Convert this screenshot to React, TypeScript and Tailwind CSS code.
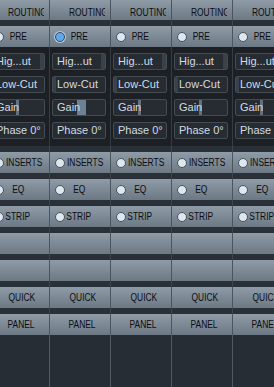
import React from 'react';

const LABEL_FONT = "font-['Liberation_Sans_Narrow','Liberation_Sans',sans-serif] text-[10px] leading-none text-[#0b0d10]";

// narrow caps label, squeezed to the width of the mixer's pixel font
function Label({ text, origin = 'origin-center' }: { text: string; origin?: string }) {
  return <span className={`inline-block whitespace-nowrap scale-x-[0.84] ${origin} ${LABEL_FONT}`}>{text}</span>;
}

function Gray({ children, h = 'h-[21px]' }: { children?: React.ReactNode; h?: string }) {
  return (
    <div className={`${h} shrink-0 border-r border-[#4b5560] bg-linear-to-b from-[#8f9ba7] to-[#6c7884] relative overflow-hidden`}>
      {children}
    </div>
  );
}

function Gap() {
  return <div className="h-[6px] shrink-0 border-r border-[#3c444d] bg-[#2a3037]" />;
}

function Radio({ on }: { on?: boolean }) {
  return (
    <span
      className={`w-[10px] h-[10px] rounded-full border shrink-0 ${on ? 'bg-[#61a8ea] border-[#2f4f6e] shadow-[0_0_0_1px_#b9c8d6]' : 'bg-[#dee6ee] border-[#48525c]'}`}
    />
  );
}

function RadioRow({ label, on, left }: { label: string; on?: boolean; left?: boolean }) {
  return (
    <Gray>
      <div className="flex items-center h-full pl-[5px]">
        <Radio on={on} />
        <span className={`ml-[2px] w-[24px] flex ${left ? 'justify-start' : 'justify-center'}`}>
          <Label text={label} origin={left ? 'origin-left' : 'origin-center'} />
        </span>
      </div>
    </Gray>
  );
}

function Btn({ text, children }: { text: string; children?: React.ReactNode }) {
  return (
    <div className="relative h-[17px] ml-[2px] w-[54px] rounded-[2px] border border-[#434b53] bg-[#262c32] overflow-hidden">
      {children}
      <span className="relative z-10 block pl-[4px] leading-[15px] text-[11px] text-[#d3dbe3] font-['Liberation_Sans',sans-serif] whitespace-nowrap">
        {text}
      </span>
    </div>
  );
}

function Strip({ selected }: { selected?: boolean }) {
  return (
    <div className="w-[61px] shrink-0 flex flex-col h-full">
      <Gray h="h-[20px]">
        <div className="pl-[19px] h-full flex items-center">
          <div className="w-[36px] overflow-hidden">
            <Label text="ROUTING" origin="origin-left" />
          </div>
        </div>
      </Gray>
      <Gap />
      <RadioRow label="PRE" on={selected} />
      <div className="h-[99px] shrink-0 border-r border-[#353c44] bg-[#1c2024] flex flex-col gap-[6px] pt-[6px]">
        <Btn text="Hig...ut">
          <span className="absolute right-0 top-0 bottom-0 w-[4px] bg-[#39414a]" />
        </Btn>
        <Btn text="Low-Cut">
          <span className="absolute left-0 top-0 bottom-0 w-[3px] bg-[#39414a]" />
        </Btn>
        <Btn text="Gain">
          <span
            className={`absolute top-0 bottom-0 left-[24px] ${selected ? 'w-[9px] bg-[#6b8294]' : 'w-[3px] bg-[#61717f]'}`}
          />
        </Btn>
        <Btn text="Phase 0°" />
      </div>
      <Gap />
      <RadioRow label="INSERTS" left />
      <Gap />
      <RadioRow label="EQ" />
      <Gap />
      <RadioRow label="STRIP" />
      <Gap />
      <Gray />
      <Gap />
      <Gray />
      <Gap />
      <Gray>
        <div className="h-full flex items-center justify-center pl-[5px]">
          <Label text="QUICK" />
        </div>
      </Gray>
      <Gap />
      <Gray>
        <div className="h-full flex items-center justify-center pl-[5px]">
          <Label text="PANEL" />
        </div>
      </Gray>
      <div className="flex-1 border-r border-[#4f5863] bg-[#272d35]" />
    </div>
  );
}

export default function App() {
  return (
    <div className="w-[274px] h-[387px] overflow-hidden bg-[#272d35]">
      <div className="flex h-full -ml-[11px]">
        {[0, 1, 2, 3, 4].map((i) => (
          <Strip key={i} selected={i === 1} />
        ))}
      </div>
    </div>
  );
}
